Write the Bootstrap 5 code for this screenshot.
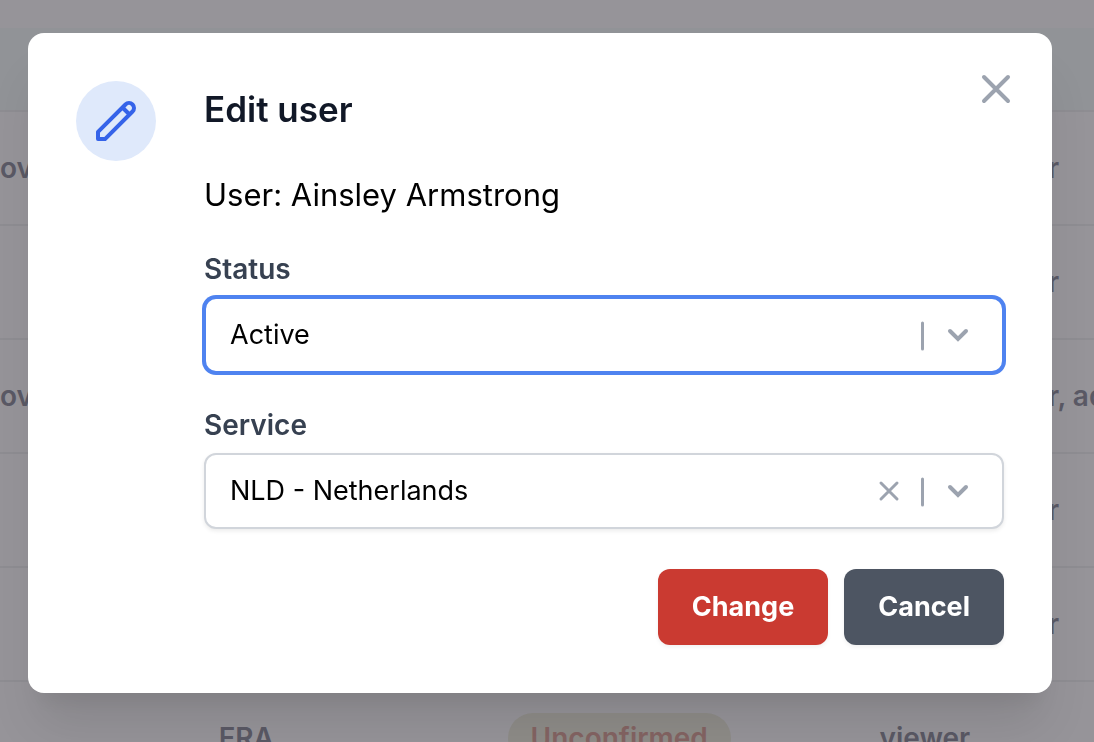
<!DOCTYPE html>
<html lang="en">
<head>
<meta charset="utf-8">
<meta name="viewport" content="width=device-width, initial-scale=1">
<title>Edit user</title>
<link href="https://cdn.jsdelivr.net/npm/bootstrap@5.3.0/dist/css/bootstrap.min.css" rel="stylesheet">
<style>
  body { font-family: Inter, "Liberation Sans", sans-serif; background: #969499; font-size: 28px; line-height: 40px; color: #000; -webkit-font-smoothing: antialiased; }
  /* dimmed users table behind the dialog */
  .users { height: 100vh; padding-top: 28px; }
  .users-table { width: 100%; table-layout: fixed; border-collapse: collapse; color: #5a5965; font-weight: 600; white-space: nowrap; }
  .users-table tr { height: 114px; border-bottom: 2px solid #8e8d92; }
  .users-table thead tr { height: 83px; background: #919397; }
  .users-table td { padding: 0; }
  .pill { background: #8e8c88; color: #846463; border-radius: 28px; padding: 8px 23px; }
  .col-name { width: 20%; } .col-country { width: 26.4%; } .col-state { width: 34%; } .col-role { width: 15.4%; }
  /* dialog */
  .edit-modal { padding: 33px 42px 33px 28px; }
  .edit-modal .modal-dialog { max-width: none; margin: 0; transform: none; }
  .edit-modal .modal-content { border: 0; border-radius: 16px; padding: 48px; box-shadow: 0 40px 50px -10px rgba(0,0,0,.1), 0 20px 20px -10px rgba(0,0,0,.05); }
  .layout { gap: 48px; }
  .round-icon { width: 80px; height: 80px; background: #dfe9fb; color: #3563e9; }
  .dialog-title { font-size: 35px; line-height: 48px; font-weight: 600; color: #111827; margin: 4px 0 38px; }
  .user-line { font-size: 31px; line-height: 48px; margin: 0 0 30px; }
  .field-label { font-weight: 600; color: #374151; margin-bottom: 8px; display: block; }
  .field { margin-bottom: 32px; }
  .field-select { appearance: none; height: 76px; border: 2px solid #d1d5db; border-radius: 12px; padding: 0 160px 0 24px; font-size: 27px; color: #000; background: #fff; box-shadow: 0 2px 4px rgba(0,0,0,.08); }
  .field-select:focus, .field-select.is-current { border-color: #4f83f0; box-shadow: 0 0 0 2px #4f83f0; outline: 0; }
  .indicators { position: absolute; top: 0; right: 28px; height: 100%; color: #9ca3af; pointer-events: none; }
  .indicators button { pointer-events: auto; }
  .icon-btn { border: 0; background: none; padding: 0; color: #9ca3af; line-height: 0; }
  .dismiss { position: absolute; top: 32px; right: 32px; }
  .action { height: 76px; border: 0; border-radius: 12px; font-size: 27px; line-height: 40px; font-weight: 700; padding: 0 34px; color: #fff; box-shadow: 0 2px 4px rgba(0,0,0,.06); }
  .action-change { background: #ca3a31; }
  .action-cancel { background: #4d5562; }
</style>
</head>
<body class="overflow-hidden">
<main class="users overflow-hidden" aria-hidden="true">
  <table class="users-table">
    <colgroup><col class="col-name"><col class="col-country"><col class="col-state"><col class="col-role"><col></colgroup>
    <thead><tr><td colspan="5"></td></tr></thead>
    <tbody>
      <tr><td>ov</td><td></td><td></td><td></td><td>r</td></tr>
      <tr><td></td><td></td><td></td><td></td><td>r</td></tr>
      <tr><td>ov</td><td></td><td></td><td></td><td>r, ad</td></tr>
      <tr><td></td><td></td><td></td><td></td><td>r</td></tr>
      <tr><td></td><td></td><td></td><td></td><td>r</td></tr>
      <tr><td></td><td>FRA</td><td><span class="pill">Unconfirmed</span></td><td>viewer</td><td></td></tr>
    </tbody>
  </table>
</main>

<div class="modal show d-block edit-modal" role="dialog" aria-modal="true" aria-labelledby="dialog-title">
  <div class="modal-dialog">
    <div class="modal-content">
      <button type="button" class="icon-btn dismiss" aria-label="Close">
        <svg width="48" height="48" viewBox="0 0 24 24" fill="none" stroke="currentColor" stroke-width="2" stroke-linecap="round" stroke-linejoin="round"><path d="M6 18L18 6M6 6l12 12"/></svg>
      </button>
      <div class="d-flex layout">
        <div class="round-icon rounded-circle d-flex align-items-center justify-content-center flex-shrink-0">
          <svg width="48" height="48" viewBox="0 0 24 24" fill="none" stroke="currentColor" stroke-width="2" stroke-linecap="round" stroke-linejoin="round"><path d="M15.232 5.232l3.536 3.536m-2.036-5.036a2.5 2.5 0 113.536 3.536L6.5 21.036H3v-3.572L16.732 3.732z"/></svg>
        </div>
        <form class="flex-grow-1">
          <h3 class="dialog-title" id="dialog-title">Edit user</h3>
          <p class="user-line">User: Ainsley Armstrong</p>
          <div class="field">
            <label class="field-label" for="status">Status</label>
            <div class="position-relative">
              <select class="w-100 d-block field-select is-current" id="status"><option>Active</option></select>
              <div class="indicators d-flex align-items-center">
                <svg width="68" height="40" viewBox="40 0 68 40" fill="none" stroke="currentColor" stroke-linecap="round"><path d="M54.500 8v26" stroke-width="3"/><path d="M82 16l8 8 8-8" stroke-width="4"/></svg>
              </div>
            </div>
          </div>
          <div class="field">
            <label class="field-label" for="service">Service</label>
            <div class="position-relative">
              <select class="w-100 d-block field-select" id="service"><option>NLD - Netherlands</option></select>
              <div class="indicators d-flex align-items-center">
                <button type="button" class="icon-btn" aria-label="Clear service"><svg width="40" height="40" viewBox="0 0 40 40" fill="none" stroke="currentColor" stroke-width="3" stroke-linecap="round"><path d="M13 12l16 16M29 12L13 28"/></svg></button>
                <svg width="68" height="40" viewBox="40 0 68 40" fill="none" stroke="currentColor" stroke-linecap="round"><path d="M54.500 8v26" stroke-width="3"/><path d="M82 16l8 8 8-8" stroke-width="4"/></svg>
              </div>
            </div>
          </div>
          <div class="d-flex justify-content-end gap-3 pt-2">
            <button type="submit" class="action action-change">Change</button>
            <button type="button" class="action action-cancel">Cancel</button>
          </div>
        </form>
      </div>
    </div>
  </div>
</div>
<script src="https://cdn.jsdelivr.net/npm/bootstrap@5.3.0/dist/js/bootstrap.bundle.min.js"></script>
</body>
</html>
